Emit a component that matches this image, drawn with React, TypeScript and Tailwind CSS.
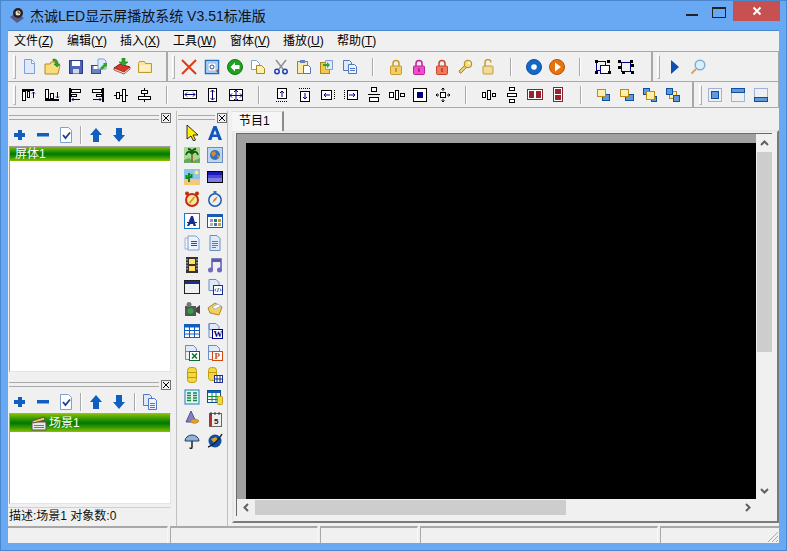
import React from 'react';

type Item = string;

const S = ({ children, w = 16, h = 16 }: { children: React.ReactNode; w?: number; h?: number }) => (
  <svg width={w} height={h} viewBox={`0 0 ${w} ${h}`}>
    {children}
  </svg>
);

const doc = (x = 3, y = 1, f = '#dfe9f8', s = '#7f9fd6') => (
  <path d={`M${x} ${y}h7l3 3v11h-10z`} fill={f} stroke={s} />
);

const lock = (c: string, d: string) => (
  <S>
    <path d="M5 7V4.500a3 3 0 0 1 6 0V7" fill="none" stroke={d} strokeWidth="1.500" />
    <rect x="2.500" y="7" width="11" height="8.500" rx="1" fill={c} stroke={d} />
    <rect x="7" y="9" width="2" height="4" fill={d} />
  </S>
);

const bars = (kids: React.ReactNode) => <S>{kids}</S>;
const K = '#000';
const N = '#000080';

const ICONS: Record<string, React.ReactNode> = {
  new: <S>{doc(2.5, 0.5)}<path d="M9.500 1v3.500H13" fill="#fff" stroke="#7f9fd6" /></S>,
  open: <S w={18} h={17}><path d="M1 6h5l1-2h5v3h4l-2 9H1z" fill="#f7dd7e" stroke="#b88a1e" /><path d="M9 1c4 0 5 2 5 5h2l-3 3-3-3h2c0-2-1-3-3-3z" fill="#2fa52f" stroke="#177a17" strokeWidth=".6" /></S>,
  save: <S><rect x="1.500" y="1.500" width="13" height="13" fill="#4f66b8" stroke="#2a3a86" /><rect x="4" y="2" width="8" height="5" fill="#fff" /><rect x="5" y="10" width="6" height="4.500" fill="#cfd6ea" /></S>,
  saveas: <S w={18} h={17}><rect x="1.500" y="7.500" width="9" height="8" fill="#6a7fc8" stroke="#35458f" /><rect x="3.500" y="8" width="5" height="3" fill="#fff" /><path d="M8 1h6l2 2v8H8z" fill="#dfe9f8" stroke="#7f9fd6" /><path d="M10 10l4-4-1-1h4v4l-1-1-4 4z" fill="#2fa52f" /></S>,
  book: <S w={18} h={17}><path d="M1 10l6-4 10 3-6 6z" fill="#d8342a" stroke="#8c1a14" /><path d="M1 10v2l10 4 6-5V9l-6 5z" fill="#f3e2c8" stroke="#8c1a14" strokeWidth=".7" /><path d="M9 0h3v4h3l-4.500 4L6 4h3z" fill="#2fa52f" stroke="#177a17" strokeWidth=".6" /></S>,
  folder: <S><path d="M1.500 4.500l1-2h5l1 2h6v9h-13z" fill="#fbe7a0" stroke="#c09a2e" /><rect x="3" y="6" width="10" height="6" fill="#fdf1c4" /></S>,
  del: <S><path d="M1 1l14 14M15 1L1 15" stroke="#e23a12" strokeWidth="2" /></S>,
  aa: <S><rect x="1.500" y="1.500" width="13" height="13" fill="#cfe4fa" stroke="#1a6fc4" strokeWidth="1.500" /><rect x="4" y="4" width="8" height="8" fill="#fff" stroke="#5a7fb5" strokeWidth=".6" /><circle cx="8" cy="8" r="2" fill="none" stroke="#2a4a96" /><path d="M12 12h3M13.500 10.500v3" stroke="#e0302a" /></S>,
  back: <S><circle cx="8" cy="8" r="7.500" fill="#1fa31f" stroke="#0d7a0d" /><path d="M8 3.500L3.500 8 8 12.500V10h4.500V6H8z" fill="#fff" /></S>,
  copy: <S><path d="M1.500 1.500h5l3 3v6h-8z" fill="#fff" stroke="#7f9fd6" /><path d="M6.500 6.500h5l3 3v5h-8z" fill="#fdf0b0" stroke="#a98620" /></S>,
  cut: <S><path d="M3 1l7 9M13 1l-7 9" stroke="#8a8f98" strokeWidth="1.500" /><circle cx="4" cy="12.500" r="2.200" fill="none" stroke="#1a3fb0" strokeWidth="1.500" /><circle cx="12" cy="12.500" r="2.200" fill="none" stroke="#1a3fb0" strokeWidth="1.500" /></S>,
  paste: <S><rect x="1.500" y="2.500" width="10" height="12" fill="#fbe9a8" stroke="#a98620" /><rect x="4" y="1" width="5" height="3" fill="#5f7fbf" /><path d="M7.500 6.500h5l2 2v6h-7z" fill="#fff" stroke="#4f77c4" /></S>,
  pasteg: <S><rect x="1.500" y="3.500" width="9" height="11" fill="#f2c94a" stroke="#a98620" /><path d="M6.500 1.500h7v9h-7z" fill="#dfe9f8" stroke="#7f9fd6" /><path d="M4 5h4V3l3 3-3 3V7H4z" fill="#2fa52f" /></S>,
  dup: <S><path d="M1.500 1.500h6l2 2v8h-8z" fill="#dfe9f8" stroke="#4f77c4" /><path d="M6.500 5.500h6l2 2v7h-8z" fill="#eef4fd" stroke="#4f77c4" /><path d="M8 9.500h5M8 11.500h5" stroke="#4f77c4" /></S>,
  lockY: lock('#f0cf6a', '#c79a2a'),
  lockP: lock('#f04ec8', '#c0209a'),
  lockR: lock('#ef7a5f', '#c8442a'),
  key: <S><path d="M3 14l-1-2 6-6 2 2-6 6z" fill="#f0cf6a" stroke="#a98620" /><circle cx="11" cy="5" r="3.800" fill="#f6dc80" stroke="#a98620" /><circle cx="12" cy="4" r="1" fill="#fff" /></S>,
  unlock: <S><path d="M5 7V3.500a3 3 0 0 1 6 0" fill="none" stroke="#c79a2a" strokeWidth="1.500" /><rect x="3" y="7" width="10" height="8" rx="1" fill="#f0dc96" stroke="#c79a2a" /></S>,
  disc: <S><circle cx="8" cy="8" r="7.500" fill="#1468c8" stroke="#0f4f9c" /><circle cx="8" cy="8" r="2.800" fill="#fff" /></S>,
  playO: <S><circle cx="8" cy="8" r="7.500" fill="#e8730c" stroke="#b3540a" /><path d="M6 3.500L12 8l-6 4.500z" fill="#fff" /></S>,
  grp: <S w={18} h={16}><rect x="2.500" y="2.500" width="9" height="9" fill="none" stroke={N} /><rect x="6.500" y="6.500" width="9" height="8" fill="#fff" stroke={N} /><path d="M1 1h3v3H1zM13 1h3v3h-3zM1 12h3v3H1zM14 12h3v3h-3z" fill={K} /></S>,
  ungrp: <S w={18} h={16}><rect x="4.500" y="3.500" width="9" height="9" fill="none" stroke={N} /><path d="M1 1h3v3H1zM13 1h3v3h-3zM1 7h3v3H1zM14 5h3v3h-3zM5 12h3v3H5zM14 12h3v3h-3z" fill={K} /></S>,
  run: <S><path d="M4 1l8 7-8 7z" fill="#0f4fb0" /></S>,
  zoomi: <S><circle cx="10" cy="6" r="4.800" fill="#d8f0fc" stroke="#7fb0d0" strokeWidth="1.500" /><path d="M6 10l-4.500 4.500" stroke="#e0a060" strokeWidth="2" /></S>,

  a1: bars(<><rect x="1" y="2" width="12" height="2" fill={K} /><rect x="1.500" y="4.500" width="3" height="9" fill="#fff" stroke={K} /><rect x="6.500" y="4.500" width="2" height="6" fill="#fff" stroke={K} /><path d="M12.500 11V5M11 6.500l1.500-1.500 1.500 1.500" fill="none" stroke={N} /></>),
  a2: bars(<><rect x="1" y="12" width="14" height="2" fill={K} /><rect x="1.500" y="2.500" width="3" height="9" fill="#fff" stroke={K} /><rect x="6.500" y="6.500" width="3" height="5" fill="#fff" stroke={K} /><path d="M13.500 5v6M12 9.500l1.500 1.500 1.500-1.500" fill="none" stroke={N} /></>),
  a3: bars(<><rect x="2" y="1" width="2" height="14" fill={K} /><rect x="4.500" y="2.500" width="9" height="3" fill="#fff" stroke={K} /><rect x="4.500" y="7.500" width="5" height="2" fill="#fff" stroke={K} /><path d="M5 12.500h8M6.500 11L5 12.500 6.500 14" fill="none" stroke={N} /></>),
  a4: bars(<><rect x="12" y="1" width="2" height="14" fill={K} /><rect x="2.500" y="2.500" width="9" height="3" fill="#fff" stroke={K} /><rect x="6.500" y="7.500" width="5" height="2" fill="#fff" stroke={K} /><path d="M3 12.500h8M9.500 11l1.500 1.500L9.500 14" fill="none" stroke={N} /></>),
  a5: bars(<><path d="M1 8.500h14" stroke={K} /><rect x="3.500" y="5.500" width="3" height="6" fill="#fff" stroke={K} /><rect x="9.500" y="2.500" width="3" height="12" fill="#fff" stroke={K} /></>),
  a6: bars(<><path d="M8.500 1v14" stroke={K} /><rect x="5.500" y="3.500" width="6" height="3" fill="#fff" stroke={K} /><rect x="2.500" y="9.500" width="12" height="3" fill="#fff" stroke={K} /></>),
  s1: bars(<><rect x="1.500" y="3.500" width="13" height="8" fill="#fff" stroke={K} /><path d="M3 7.500h10M5 5.500l-2 2 2 2M11 5.500l2 2-2 2" fill="none" stroke={N} /></>),
  s2: bars(<><rect x="3.500" y="1.500" width="8" height="13" fill="#fff" stroke={K} /><path d="M7.500 3v10M5.500 5l2-2 2 2M5.500 11l2 2 2-2" fill="none" stroke={N} /></>),
  s3: bars(<><rect x="1.500" y="2.500" width="13" height="11" fill="#fff" stroke={K} /><path d="M2 8.500h12M8 3v10M4 6.500l-2 2 2 2M12 6.500l2 2-2 2M6 5l2-2 2 2M6 12l2 2 2-2" fill="none" stroke={N} /></>),
  d1: bars(<><path d="M2 14.500h12" stroke={K} strokeDasharray="1 1" /><rect x="3.500" y="1.500" width="9" height="10" fill="#fff" stroke={K} /><path d="M8 10V4M6 6l2-2 2 2" fill="none" stroke={N} /></>),
  d2: bars(<><path d="M2 1.500h12" stroke={K} strokeDasharray="1 1" /><rect x="3.500" y="4.500" width="9" height="10" fill="#fff" stroke={K} /><path d="M8 6v6M6 10l2 2 2-2" fill="none" stroke={N} /></>),
  d3: bars(<><rect x="1.500" y="3.500" width="10" height="9" fill="#fff" stroke={K} /><path d="M14.500 3v10" stroke={K} strokeDasharray="1 1" /><path d="M10 8H4M6 6L4 8l2 2" fill="none" stroke={N} /></>),
  d4: bars(<><path d="M1.500 3v10" stroke={K} strokeDasharray="1 1" /><rect x="4.500" y="3.500" width="10" height="9" fill="#fff" stroke={K} /><path d="M6 8h6M10 6l2 2-2 2" fill="none" stroke={N} /></>),
  d5: bars(<><rect x="5.500" y="0.500" width="5" height="4" fill="#fff" stroke={K} /><path d="M2 7.500h12" stroke={K} /><rect x="3.500" y="10.500" width="9" height="4" fill="#fff" stroke={K} /></>),
  d6: bars(<><rect x="0.500" y="5.500" width="4" height="5" fill="#fff" stroke={K} /><rect x="6.500" y="3.500" width="3" height="9" fill="#fff" stroke={K} /><rect x="11.500" y="6.500" width="4" height="3" fill="#fff" stroke={K} /></>),
  c1: bars(<><rect x="1.500" y="1.500" width="13" height="13" fill="#fff" stroke={K} /><rect x="5" y="5" width="6" height="6" fill={N} /></>),
  c2: bars(<><rect x="5.500" y="5.500" width="5" height="5" fill="#fff" stroke={K} /><path d="M8 1v3M6.500 2.500L8 1l1.500 1.500M8 15v-3M6.500 13.500L8 15l1.500-1.500M1 8h3M2.500 6.500L1 8l1.500 1.500M15 8h-3M13.500 6.500L15 8l-1.500 1.500" fill="none" stroke={K} /></>),
  e1: bars(<><rect x="1.500" y="5.500" width="3" height="5" fill="#fff" stroke={K} /><rect x="6.500" y="3.500" width="3" height="9" fill="#fff" stroke={K} /><rect x="11.500" y="6.500" width="3" height="3" fill="#fff" stroke={K} /></>),
  e2: bars(<><rect x="5.500" y="0.500" width="5" height="3" fill="#fff" stroke={K} /><rect x="3.500" y="6.500" width="9" height="3" fill="#fff" stroke={K} /><rect x="5.500" y="12.500" width="5" height="3" fill="#fff" stroke={K} /></>),
  e3: bars(<><rect x="0.500" y="2.500" width="15" height="10" fill="#fff" stroke="#8c2030" /><rect x="2" y="4" width="5" height="7" fill="#9c2030" /><rect x="9" y="4" width="5" height="7" fill="#9c2030" /></>),
  e4: bars(<><rect x="3.500" y="0.500" width="9" height="14" fill="#fff" stroke="#8c2030" /><rect x="5" y="2" width="6" height="5" fill="#9c2030" /><rect x="5" y="8" width="6" height="5" fill="#9c2030" /></>),
  o1: bars(<><rect x="6.500" y="7.500" width="7" height="6" fill="#5f9ad8" stroke="#0f4fa0" /><rect x="1.500" y="2.500" width="8" height="7" fill="#fdf0a8" stroke="#c08a10" /></>),
  o2: bars(<><rect x="6.500" y="7.500" width="8" height="6" fill="#5f9ad8" stroke="#0f4fa0" /><rect x="1.500" y="2.500" width="8" height="7" fill="#fdf0a8" stroke="#c08a10" /></>),
  o3: bars(<><rect x="1.500" y="1.500" width="6" height="6" fill="#5f9ad8" stroke="#0f4fa0" /><rect x="9.500" y="9.500" width="5" height="5" fill="#5f9ad8" stroke="#0f4fa0" /><rect x="4.500" y="4.500" width="8" height="8" fill="#fdf0a8" stroke="#c08a10" /></>),
  o4: bars(<><rect x="4.500" y="4.500" width="7" height="7" fill="#fdf0a8" stroke="#c08a10" /><rect x="1.500" y="1.500" width="6" height="6" fill="#5f9ad8" stroke="#0f4fa0" /><rect x="8.500" y="8.500" width="6" height="6" fill="#5f9ad8" stroke="#0f4fa0" /></>),
  w1: bars(<><rect x="1.500" y="1.500" width="13" height="13" fill="none" stroke="#4f77c4" strokeDasharray="1 1" /><rect x="4.500" y="4.500" width="7" height="7" fill="#5f9ad8" stroke="#0f4fa0" /></>),
  w2: bars(<><rect x="1.500" y="1.500" width="13" height="13" fill="none" stroke="#4f77c4" strokeDasharray="1 1" /><rect x="1.500" y="1.500" width="13" height="4" fill="#5f9ad8" stroke="#0f4fa0" /></>),
  w3: bars(<><rect x="1.500" y="1.500" width="13" height="13" fill="none" stroke="#4f77c4" strokeDasharray="1 1" /><rect x="1.500" y="10.500" width="13" height="4" fill="#5f9ad8" stroke="#0f4fa0" /></>),

  plus: <S><path d="M6 3h4v3h3v4h-3v3H6v-3H2V6h4z" fill="#0f5fc0" /></S>,
  minus: <S><rect x="2" y="6" width="12" height="3.500" fill="#0f5fc0" /></S>,
  check: <S><path d="M2.500 0.500h8l3 3v12h-11z" fill="#fff" stroke="#7fa0c8" /><path d="M5 8l2.500 3L12 5.500" fill="none" stroke="#1a3f9c" strokeWidth="1.800" /></S>,
  up: <S><path d="M8 1l6 7H11v7H5V8H2z" fill="#0f5fc0" /></S>,
  down: <S><path d="M8 15L2 8H5V1h6v7h3z" fill="#0f5fc0" /></S>,
  copy2: <S><path d="M1.500 0.500h6l2 2v9h-8z" fill="#dfe9f8" stroke="#4f77c4" /><path d="M6.500 4.500h6l2 2v9h-8z" fill="#eef4fd" stroke="#4f77c4" /><path d="M8 9.500h5M8 11.500h5M8 13.500h5" stroke="#4f77c4" /></S>,

  cursor: <S><path d="M3 0l11 10H9l2.500 5-2 1-2.500-5L3 14z" fill="#ffef00" stroke="#000" strokeWidth=".8" /></S>,
  A: <S><path d="M6.500 1h3L15 15h-3.500l-1-3h-5l-1 3H1zM8 5l-1.700 4.500h3.400z" fill="#1058c0" /></S>,
  palm: <S><rect width="16" height="16" fill="#a8d890" /><path d="M0 13l5-2 4 3 7-3v5H0z" fill="#6aa860" /><path d="M8 15V7" stroke="#8a5a20" strokeWidth="1.500" /><path d="M8 7C5 3 3 5 2 8M8 7c3-4 5-2 6 1M8 7C8 3 6 2 4 2M8 7c0-4 2-5 4-5" fill="none" stroke="#0c600c" strokeWidth="1.800" /></S>,
  world: <S><rect x=".5" y=".5" width="15" height="15" fill="#c0d4ec" stroke="#6a8cc0" /><circle cx="8" cy="8" r="5" fill="#3070c0" /><path d="M4 6l4-2 1 3-3 3zM10 8l3 1-2 3z" fill="#e08a2a" /></S>,
  cactus: <S><rect width="16" height="10" fill="#8cc4f0" /><rect y="10" width="16" height="6" fill="#f4c878" /><circle cx="12.500" cy="3.500" r="2" fill="#ffef60" /><path d="M5 13V4M2.500 6v3H5M7.500 5v3H5" fill="none" stroke="#108a10" strokeWidth="2" /></S>,
  grad: <S><rect x=".5" y="2.500" width="15" height="11" fill="#7a7ae8" stroke="#000" /><rect x="1" y="3" width="14" height="3" fill="#1a1ab8" /><rect x="1" y="6" width="14" height="3" fill="#4a4ad0" /></S>,
  clock: <S><circle cx="8" cy="9" r="6" fill="#f4e8a0" stroke="#c82a10" strokeWidth="2" /><circle cx="3" cy="2.500" r="2" fill="#c82a10" /><circle cx="13" cy="2.500" r="2" fill="#c82a10" /><path d="M5.500 12l5-6" stroke="#d09010" strokeWidth="1.500" /></S>,
  stop: <S><rect x="6.500" y="0" width="3" height="2.500" fill="#3a70c0" /><circle cx="8" cy="9" r="6.200" fill="#e8f0fa" stroke="#1a5ab0" strokeWidth="1.500" /><path d="M5 12l2-4 4-3-2 4z" fill="#e07a20" /></S>,
  texta: <S><rect x=".5" y=".5" width="15" height="15" fill="#fff" stroke="#1a78c8" /><path d="M7 3h2l3 10H9.500L9 11H6.500L5 13H3z" fill="#1a2f8c" /><path d="M3 9.500h10" stroke="#1a2f8c" /></S>,
  colors: <S><rect x=".5" y="1.500" width="15" height="13" fill="#fff" stroke="#1a5ab0" /><rect x="1" y="2" width="14" height="2" fill="#1a5ab0" /><path d="M3 6h3v3H3z" fill="#9090d0" /><path d="M7 6h3v3H7z" fill="#108a50" /><path d="M11 6h3v3h-3z" fill="#d09020" /><path d="M3 10h3v3H3z" fill="#b0b0c0" /><path d="M7 10h3v3H7z" fill="#4070c0" /><path d="M11 10h3v3h-3z" fill="#d0a040" /></S>,
  pages: <S><path d="M1 3h6v11H1z" fill="#eef2fa" stroke="#a0b4d4" /><path d="M4 1h8l3 3v11H4z" fill="#eef4fd" stroke="#7f9fd6" /><path d="M7 6.500h6M7 8.500h6M7 10.500h6" stroke="#2a4a96" /></S>,
  page: <S><path d="M3 .5h7l3 3v12H3z" fill="#dfe9f8" stroke="#6a8cc0" /><path d="M5 6.500h6M5 8.500h6M5 10.500h6M5 12.500h4" stroke="#5a7ab0" /></S>,
  film: <S><rect x="2" y="0" width="12" height="16" fill="#333" /><rect x="5" y="2" width="6" height="5" fill="#ffe060" /><rect x="5" y="9" width="6" height="5" fill="#ffe060" /><path d="M3 2v12M13 2v12" stroke="#ddd" strokeDasharray="1.500 1.500" /></S>,
  music: <S><path d="M5 13V2h9v11" fill="none" stroke="#5a5ab0" strokeWidth="1.500" /><path d="M5 2h9v3H5z" fill="#5a5ab0" /><circle cx="3.500" cy="13" r="2.500" fill="#6a6ac0" /><circle cx="12.500" cy="13" r="2.500" fill="#6a6ac0" /></S>,
  win: <S><rect x=".5" y="1.500" width="15" height="13" fill="#f0f0f0" stroke="#222" /><rect x="1" y="2" width="14" height="3" fill="#1a2f8c" /></S>,
  html: <S><path d="M2 .5h7l3 3v8H2z" fill="#dfe9f8" stroke="#6a8cc0" /><rect x="6.500" y="6.500" width="9" height="9" fill="#fff" stroke="#1a2f8c" /><path d="M9 9.500L7.800 11 9 12.500M13 9.500l1.200 1.500-1.200 1.500M11.500 9l-1 4" fill="none" stroke="#1a2f8c" strokeWidth=".8" /></S>,
  cam: <S><rect x="1" y="5" width="11" height="10" fill="#555" /><circle cx="5" cy="3.500" r="2.500" fill="#777" /><circle cx="6.500" cy="10" r="3" fill="#30a040" /><path d="M12 7l4-3v9l-4-2z" fill="#444" /></S>,
  box: <S><path d="M1 7l7-5 7 4-3 8-9-2z" fill="#f0d060" stroke="#b08820" /><path d="M5 6l6-3 3 2-6 3z" fill="#fff" stroke="#80a0d0" strokeWidth=".6" /></S>,
  table: <S><rect x=".5" y="1.500" width="15" height="13" fill="#fff" stroke="#0f5fc0" /><rect x="1" y="2" width="14" height="2.500" fill="#0f5fc0" /><path d="M5.500 2v12M10.500 2v12M1 7.500h14M1 11h14" stroke="#0f5fc0" /></S>,
  word: <S><path d="M2 .5h7l3 3v3H2z" fill="#dfe9f8" stroke="#6a8cc0" /><path d="M2 .5v14h4" fill="none" stroke="#6a8cc0" /><rect x="5.500" y="6.500" width="10" height="9" fill="#fff" stroke={N} /><text x="6.500" y="14" fontFamily="Liberation Serif" fontWeight="bold" fontSize="9" fill={N}>W</text></S>,
  xls: <S><path d="M1.500 .5h8l3 3v3h-11z" fill="#dfe9f8" stroke="#6a8cc0" /><path d="M1.500 .5v14h4" fill="none" stroke="#6a8cc0" /><rect x="5.500" y="6.500" width="10" height="9" fill="#fff" stroke="#106a30" /><path d="M8 8.500l5 5M13 8.500l-5 5" stroke="#106a30" strokeWidth="1.500" /></S>,
  ppt: <S><path d="M1.500 .5h8l3 3v3h-11z" fill="#dfe9f8" stroke="#6a8cc0" /><path d="M1.500 .5v14h4" fill="none" stroke="#6a8cc0" /><rect x="5.500" y="6.500" width="10" height="9" fill="#fff" stroke="#d04a10" /><text x="7.500" y="14" fontFamily="Liberation Serif" fontWeight="bold" fontSize="9" fill="#d04a10">P</text></S>,
  db: <S><rect x="3.500" y="0.500" width="9" height="15" rx="3" fill="#f4d840" stroke="#c09a10" /><path d="M4 5.500h8M4 10.500h8" stroke="#c09a10" /></S>,
  dbt: <S><rect x="1.500" y="0.500" width="8" height="13" rx="3" fill="#f4d840" stroke="#c09a10" /><path d="M2 5.500h7" stroke="#c09a10" /><rect x="7.500" y="8.500" width="8" height="7" fill="#fff" stroke="#1a2f8c" /><path d="M10 9v6M13 9v6M8 12h7" stroke="#1a2f8c" /></S>,
  list: <S><rect x="1" y="1" width="14" height="14" fill="#e8f6f0" stroke="#1a78c8" /><path d="M3 4h4M9 4h4M3 6.500h4M9 6.500h4M3 9h4M9 9h4M3 11.500h4M9 11.500h4" stroke="#108a40" strokeWidth="1.500" /></S>,
  tbdb: <S><rect x=".5" y="1.500" width="13" height="12" fill="#fff" stroke="#0f4f90" /><rect x="1" y="2" width="12" height="2" fill="#0f5fc0" /><path d="M5 4v9M9 4v9M1 7.500h12M1 10.500h12" stroke="#108a40" /><rect x="10.500" y="7.500" width="5" height="8" rx="1" fill="#f4d840" stroke="#c09a10" /></S>,
  tri: <S><path d="M7 0L2 11h10z" fill="#8080c8" stroke="#5050a0" /><path d="M6 10c3-3 8-2 9 0-2 3-7 3-9 0z" fill="#e8a020" stroke="#a06810" strokeWidth=".6" /></S>,
  cal: <S><rect x="2.500" y="2.500" width="12" height="13" fill="#eee" stroke="#666" /><rect x="2" y="3" width="3" height="12" fill="#b03030" /><path d="M4 1v3M8 1v3M12 1v3" stroke="#333" /><text x="7" y="13" fontFamily="Liberation Sans" fontWeight="bold" fontSize="8" fill="#222">5</text></S>,
  umb: <S><path d="M1 8a7 6 0 0 1 14 0z" fill="#8fb4dc" stroke="#2a3a5a" /><path d="M8 8v6c0 2-2 2-2 .5" fill="none" stroke="#222" strokeWidth="1.500" /></S>,
  ie: <S><circle cx="8" cy="8" r="6.500" fill="#0f4fa0" /><path d="M4 6l5-2 2 3-4 3z" fill="#e0a020" /><path d="M1 14C5 13 12 7 15 1" fill="none" stroke="#223" strokeWidth="1.500" /></S>,
  clap: <S><rect x="1" y="7" width="14" height="8" fill="#e8e8e8" stroke="#555" /><path d="M1 6l12-4 1 3L2 8z" fill="#f0d040" stroke="#555" /><path d="M3 10.500h10M3 12.500h10" stroke="#777" /></S>,
};

const Sep = () => (
  <div className="w-[23px] h-[18px] flex justify-center shrink-0">
    <div className="w-[2px] h-full bg-[#a8a8a8] border-r border-white" />
  </div>
);

const Grip = ({ h = 'h-[24px]' }: { h?: string }) => <div className={`w-[3px] ${h} border border-[#b0b0b0] border-t-white border-l-white shrink-0`} />;

const Row = ({ items, className = '' }: { items: Item[]; className?: string }) => (
  <div className={`flex items-center ${className}`}>
    {items.map((n, i) =>
      n === '|' ? (
        <Sep key={i} />
      ) : (
        <div key={i} className="w-[23px] h-[22px] flex items-center justify-center shrink-0">
          {ICONS[n]}
        </div>
      ),
    )}
  </div>
);

const Menu = ({ label, hot, w = 'w-[53px]' }: { label: string; hot: string; w?: string }) => (
  <span className={`${w} shrink-0`}>
    {label}(<span className="underline">{hot}</span>)
  </span>
);

const DockHeader = ({ width }: { width: string }) => (
  <div className={`h-[13px] shrink-0 flex items-center gap-[2px] pl-px ${width}`}>
    <div className="flex-1 h-[5px] border-y border-[#a8a8a8]" />
    <div className="w-[10px] h-[10px] border border-[#707070] bg-[#f0f0f0] flex items-center justify-center">
      <svg width="6" height="6" viewBox="0 0 6 6">
        <path d="M0 0l6 6M6 0L0 6" stroke="#000" />
      </svg>
    </div>
  </div>
);

const DockSep = ({ ml = 'ml-[3px]' }: { ml?: string }) => <div className={`w-[2px] h-[18px] ${ml} mr-[2px] bg-[#a8a8a8] border-r border-white`} />;

const palette = [
  ['cursor', 'A'],
  ['palm', 'world'],
  ['cactus', 'grad'],
  ['clock', 'stop'],
  ['texta', 'colors'],
  ['pages', 'page'],
  ['film', 'music'],
  ['win', 'html'],
  ['cam', 'box'],
  ['table', 'word'],
  ['xls', 'ppt'],
  ['db', 'dbt'],
  ['list', 'tbdb'],
  ['tri', 'cal'],
  ['umb', 'ie'],
];

const GREEN = 'bg-[linear-gradient(180deg,#84bc00_0%,#2a9400_30%,#007800_50%,#2a9400_70%,#8cc000_100%)]';

export default function App() {
  return (
    <div className="w-[787px] h-[551px] bg-[#69a9f3] border border-[#4a86cc] flex flex-col overflow-hidden text-black font-[family-name:'Liberation_Sans','Noto_Sans_CJK_SC',sans-serif]">
      {/* Title bar */}
      <div className="h-[29px] shrink-0 flex items-start pl-[8px]">
        <div className="mt-[6px] mr-[5px]">
          <svg width="16" height="18" viewBox="0 0 16 18">
            <path d="M1 10l6-4 8 5-7 5z" fill="#5a5a8a" />
            <circle cx="9" cy="6" r="5" fill="#222" />
            <circle cx="9" cy="6" r="2.500" fill="#dfe8c8" />
            <path d="M9 4v2h2" fill="none" stroke="#b03020" />
          </svg>
        </div>
        <div className="mt-[6px] text-[14px] leading-[18px] text-[#111]">杰诚LED显示屏播放系统 V3.51标准版</div>
        <div className="flex-1" />
        <div className="w-[12px] h-[2px] bg-[#222] mt-[13px] mr-[14px]" />
        <div className="w-[14px] h-[11px] border border-[#222] border-t-[2px] mt-[6px] mr-[7px]" />
        <div className="w-[47px] h-[20px] bg-[#c75050] flex items-center justify-center mr-[6px]">
          <svg width="10" height="10" viewBox="0 0 10 10">
            <path d="M1.500 1.500l7 7M8.500 1.500l-7 7" stroke="#fff" strokeWidth="2" />
          </svg>
        </div>
      </div>

      {/* Client */}
      <div className="mx-[7px] flex-1 min-h-0 flex flex-col bg-[#f0f0f0] border-t border-[#4a86cc]">
        <div className="h-[20px] shrink-0 flex items-center pl-[6px] text-[12px] leading-none">
          <Menu label="文件" hot="Z" />
          <Menu label="编辑" hot="Y" />
          <Menu label="插入" hot="X" />
          <Menu label="工具" hot="W" w="w-[57px]" />
          <Menu label="窗体" hot="V" />
          <Menu label="播放" hot="U" w="w-[54px]" />
          <Menu label="帮助" hot="T" />
        </div>

        {/* Toolbar 1 */}
        <div className="h-[31px] shrink-0 flex border-y border-[#a8a8a8]">
          <div className="w-[160px] flex items-center pl-[5px] border-r-2 border-[#a8a8a8]">
            <Grip />
            <Row items={['new', 'open', 'save', 'saveas', 'book', 'folder']} className="ml-[2px]" />
          </div>
          <div className="w-[485px] flex items-center pl-[4px] border-r-2 border-[#a8a8a8]">
            <Grip />
            <Row
              items={['del', 'aa', 'back', 'copy', 'cut', 'paste', 'pasteg', 'dup', '|', 'lockY', 'lockP', 'lockR', 'key', 'unlock', '|', 'disc', 'playO', '|', 'grp', 'ungrp']}
              className="ml-[2px]"
            />
          </div>
          <div className="flex-1 flex items-center pl-[4px] border-r border-[#a8a8a8]">
            <Grip />
            <Row items={['run', 'zoomi']} className="ml-[3px]" />
          </div>
        </div>

        {/* Toolbar 2 */}
        <div className="h-[26px] shrink-0 flex border-b border-[#a8a8a8]">
          <div className="w-[686px] flex items-center pl-[5px] border-r-2 border-[#a8a8a8]">
            <Grip h="h-[20px]" />
            <Row
              items={['a1', 'a2', 'a3', 'a4', 'a5', 'a6', '|', 's1', 's2', 's3', '|', 'd1', 'd2', 'd3', 'd4', 'd5', 'd6', 'c1', 'c2', '|', 'e1', 'e2', 'e3', 'e4', '|', 'o1', 'o2', 'o3', 'o4']}
              className="ml-[1px]"
            />
          </div>
          <div className="flex-1 flex items-center pl-[5px] border-r border-[#a8a8a8]">
            <Grip h="h-[20px]" />
            <Row items={['w1', 'w2', 'w3']} className="ml-[1px]" />
          </div>
        </div>

        {/* Main */}
        <div className="flex-1 min-h-0 flex pt-[3px]">
          {/* Left docks */}
          <div className="w-[164px] shrink-0 flex flex-col">
            <DockHeader width="w-[163px]" />
            <div className="h-[22px] shrink-0 flex items-center">
              <Row items={['plus', 'minus', 'check']} />
              <DockSep />
              <Row items={['up', 'down']} />
            </div>
            <div className="h-[226px] shrink-0 mx-[1px] bg-white border border-[#a0a0a0] border-r-[#e4e4e4] border-b-[#e4e4e4]">
              <div className={`h-[14px] ${GREEN} text-white text-[12px] leading-[14px] pl-[5px]`}>屏体1</div>
            </div>
            <div className="h-[6px] shrink-0" />
            <DockHeader width="w-[163px]" />
            <div className="h-[22px] shrink-0 flex items-center">
              <Row items={['plus', 'minus', 'check']} />
              <DockSep />
              <Row items={['up', 'down']} />
              <DockSep ml="ml-[4px]" />
              <Row items={['copy2']} />
            </div>
            <div className="h-[91px] shrink-0 mx-[1px] bg-white border border-[#a0a0a0] border-r-[#e4e4e4] border-b-[#e4e4e4]">
              <div className={`h-[18px] ${GREEN} text-white text-[12px] leading-[18px] pl-[21px] flex items-center gap-[2px]`}>
                {ICONS.clap}
                <span>场景1</span>
              </div>
            </div>
            <div className="h-[18px] mt-[3px] mr-[1px] border-t border-[#d0d0d0] text-[12px] leading-[17px] text-[#111] pl-[1px]">描述:场景1 对象数:0</div>
          </div>

          {/* Palette */}
          <div className="w-[52px] ml-[4px] shrink-0 border-x border-[#c0c0c0]">
            <DockHeader width="w-[50px]" />
            <div className="grid grid-cols-2 auto-rows-[22px] -mt-[2px] pl-[3px] pr-[1px]">
              {palette.flat().map((n, i) => (
                <div key={i} className="flex items-center justify-center">
                  {ICONS[n]}
                </div>
              ))}
            </div>
          </div>

          {/* Content */}
          <div className="flex-1 min-w-0 ml-[4px] flex flex-col pb-[3px]">
            <div className="h-[19px] flex shrink-0">
              <div className="h-[20px] w-[52px] bg-[#f6f6f6] border-r-2 border-[#8a8a8a] border-t border-t-[#e0e0e0] text-[12px] leading-[18px] pl-[7px] relative z-10">节目1</div>
            </div>
            <div className="flex-1 min-h-0 border-t-2 border-l-2 border-t-[#e8e8e8] border-l-[#e8e8e8] border-r-2 border-b-2 border-r-[#7a7a7a] border-b-[#7a7a7a] bg-[#f0f0f0] pt-[1px] pl-[2px] pr-[5px] pb-[5px] flex">
              <div className="flex-1 min-w-0 border-t border-l border-[#696969] flex flex-col">
                <div className="flex-1 min-h-0 flex">
                  <div className="flex-1 min-w-0 bg-[#a0a0a0] pt-[9px] pl-[9px]">
                    <div className="w-full h-full bg-black" />
                  </div>
                  <div className="w-[16px] shrink-0 bg-[#f0f0f0] flex flex-col">
                    <div className="h-[17px] shrink-0 flex items-center justify-center">
                      <svg width="9" height="6" viewBox="0 0 9 6"><path d="M1 5l3.500-3.500L8 5" fill="none" stroke="#606060" strokeWidth="2" /></svg>
                    </div>
                    <div className="h-[200px] shrink-0 bg-[#cdcdcd] ml-px mt-px" />
                    <div className="flex-1" />
                    <div className="h-[17px] shrink-0 flex items-center justify-center">
                      <svg width="9" height="6" viewBox="0 0 9 6"><path d="M1 1l3.500 3.500L8 1" fill="none" stroke="#606060" strokeWidth="2" /></svg>
                    </div>
                  </div>
                </div>
                <div className="h-[17px] shrink-0 flex bg-[#f0f0f0]">
                  <div className="w-[17px] shrink-0 flex items-center justify-center">
                    <svg width="6" height="9" viewBox="0 0 6 9"><path d="M5 1L1.500 4.500 5 8" fill="none" stroke="#606060" strokeWidth="2" /></svg>
                  </div>
                  <div className="w-[311px] shrink-0 bg-[#cdcdcd] my-px ml-px" />
                  <div className="flex-1" />
                  <div className="w-[17px] shrink-0 flex items-center justify-center">
                    <svg width="6" height="9" viewBox="0 0 6 9"><path d="M1 1l3.500 3.500L1 8" fill="none" stroke="#606060" strokeWidth="2" /></svg>
                  </div>
                  <div className="w-[16px] shrink-0" />
                </div>
              </div>
            </div>
          </div>
        </div>

        {/* Status bar */}
        <div className="h-[17px] shrink-0 flex gap-[2px]">
          <div className="w-[160px] border-t-2 border-[#a8a8a8] border-r border-r-[#f8f8f8]" />
          <div className="w-[148px] border-t-2 border-l border-[#a8a8a8] border-r border-r-[#f8f8f8]" />
          <div className="w-[98px] border-t-2 border-l border-[#a8a8a8] border-r border-r-[#f8f8f8]" />
          <div className="w-[238px] border-t-2 border-l border-[#a8a8a8] border-r border-r-[#f8f8f8]" />
          <div className="flex-1 border-t-2 border-l border-[#a8a8a8] flex items-end justify-end">
            <svg width="12" height="12" viewBox="0 0 12 12">
              <path d="M11 1L1 11M11 5l-6 6M11 9l-2 2" stroke="#a8a8a8" />
            </svg>
          </div>
        </div>
      </div>
      <div className="h-[7px] shrink-0" />
    </div>
  );
}
